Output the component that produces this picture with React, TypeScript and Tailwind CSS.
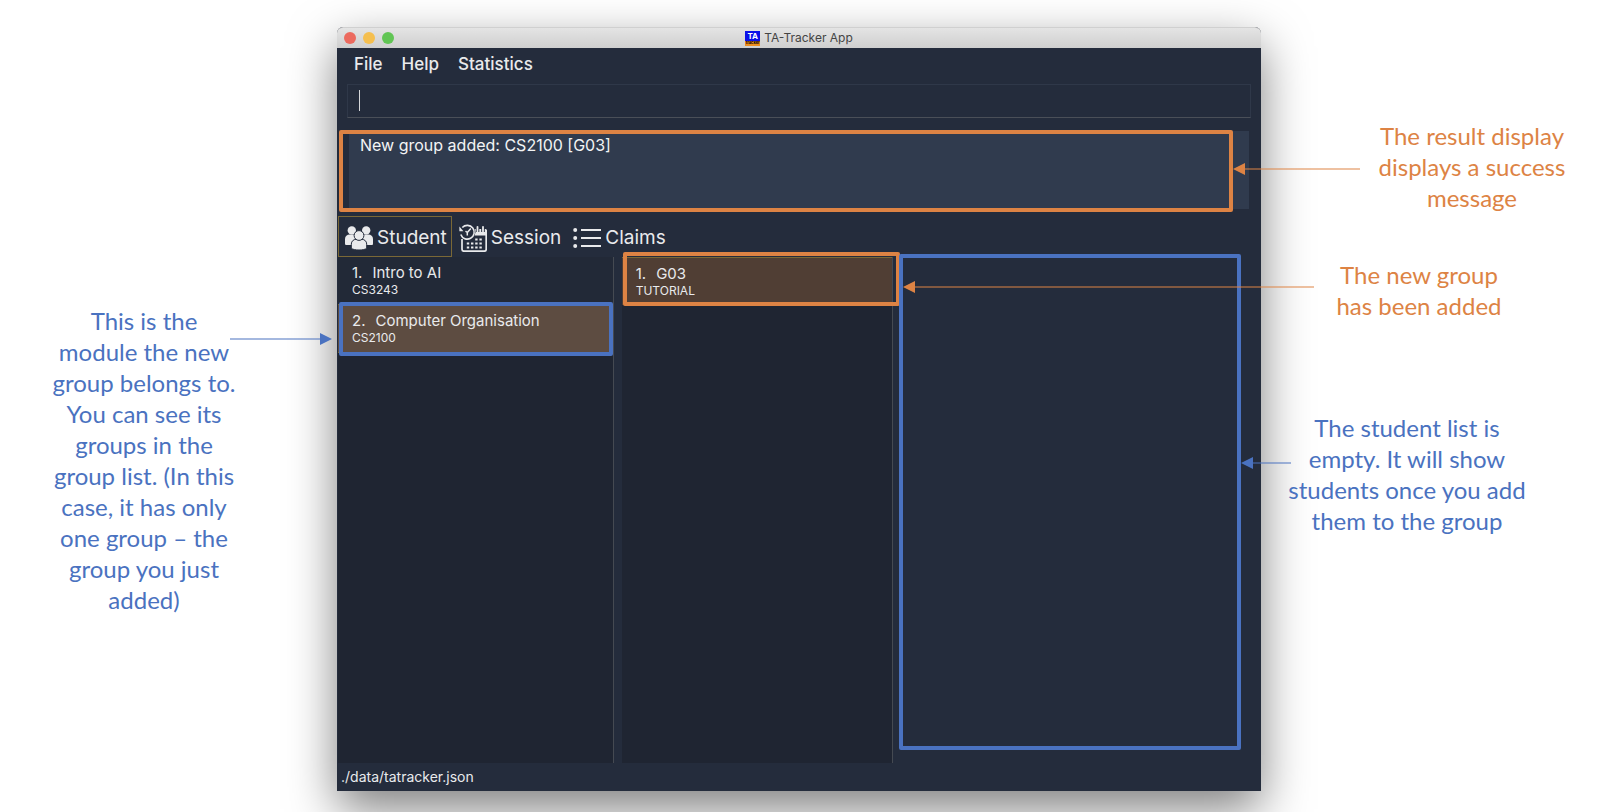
import React from "react";

type Side = "left" | "right";

function Arrow({ side, className }: { side: Side; className: string }) {
  return (
    <span
      aria-hidden="true"
      className={`pointer-events-none absolute z-20 flex h-3 items-center ${side === "right" ? "flex-row-reverse" : ""} ${className}`}
    >
      <svg className="h-3 w-3 shrink-0" viewBox="0 0 12 12" fill="currentColor">
        {side === "left" ? <path d="M0 6 12 0v12z" /> : <path d="M12 6 0 0v12z" />}
      </svg>
      <span className="h-0.5 grow bg-current opacity-50" />
    </span>
  );
}

function Frame({ className }: { className: string }) {
  return <span aria-hidden="true" className={`pointer-events-none absolute z-10 rounded-xs border-4 ${className}`} />;
}

function PeopleIcon() {
  return (
    <svg className="h-6 w-7" viewBox="0 0 28 24" fill="#e9eaec">
      <circle cx="6.8" cy="4.4" r="4.2" />
      <circle cx="21.2" cy="4.4" r="4.2" />
      <path d="M0 17.500V13c0-3 2.200-4.600 4.600-4.600h4.600c1 0 2 .5 2.500 1v9.600H1.500C.5 19 0 18.500 0 17.500z" />
      <path d="M28 17.500V13c0-3-2.200-4.600-4.600-4.600h-4.600c-1 0-2 .5-2.500 1v9.600h10.200c1 0 1.500-.5 1.500-1.500z" />
      <g stroke="#242c3c" strokeWidth="1">
        <path d="M6.300 22.500v-4.300c0-3 2.200-4.900 5-4.900h5.400c2.800 0 5 1.900 5 4.900v4.300c-2 1-4.500 1.500-7.700 1.500s-5.700-.5-7.700-1.500z" />
        <circle cx="14" cy="9.500" r="4.900" />
      </g>
    </svg>
  );
}

function SessionIcon() {
  return (
    <svg className="h-7 w-7" viewBox="0 0 28 28" fill="none" stroke="#e9eaec">
      <path d="M3 15v10.200Q3 27.200 5 27.200h20.200Q27.200 27.200 27.200 25.200V6" strokeWidth="1.700" />
      <path d="M15 5h11.500Q28 5 28 6.500V11.500H14z" fill="#e9eaec" stroke="none" />
      <path d="M18.500 3v5M24 3v5" stroke="#242c3c" strokeWidth="3.600" />
      <path d="M18.500 2.800v4.700M24 2.800v4.700" strokeWidth="1.800" strokeLinecap="round" />
      <circle cx="8.200" cy="8.200" r="8.200" fill="#242c3c" stroke="none" />
      <path d="M3.300 3.500A6.900 6.900 0 1 1 1.800 10.500" strokeWidth="1.600" />
      <path d="M.4 2.500v4.800h4z" fill="#e9eaec" stroke="none" />
      <path d="M11.800 4.500 8.300 8.500v3M8.300 8.500 6.500 7.200" strokeWidth="1.500" />
      <path d="M16.200 15.500H24M7.800 19.500H24M7.800 23.500H24" strokeWidth="2.200" strokeDasharray="2.400 1.800" />
    </svg>
  );
}

function ListIcon() {
  return (
    <svg className="h-6 w-7" viewBox="0 0 28 24" fill="#e9eaec">
      <circle cx="2.200" cy="4" r="2" />
      <circle cx="2.200" cy="12" r="2" />
      <circle cx="2.200" cy="20" r="2" />
      <path d="M8 3h20v2H8zM8 11h20v2H8zM8 19h20v2H8z" />
    </svg>
  );
}

function Tab({ label, selected, children }: { label: string; selected?: boolean; children: React.ReactNode }) {
  return (
    <button
      type="button"
      role="tab"
      aria-selected={!!selected}
      className={`flex h-[41px] items-center gap-1 border pl-1.5 pr-1 pt-0.5 text-[19px] ${selected ? "border-[#7a6836]" : "border-transparent"}`}
    >
      {children}
      {label}
    </button>
  );
}

function Entry({ index, title, detail }: { index: number; title: string; detail: string }) {
  return (
    <div className="flex h-[47px] flex-col justify-center px-3.5 pb-px">
      <div className="flex gap-2.5 text-[15px] leading-[18px]">
        <span>{index}.</span>
        <span>{title}</span>
      </div>
      <div className="text-xs leading-[15px]">{detail}</div>
    </div>
  );
}

export default function App() {
  return (
    <main className="grid min-h-screen grid-cols-[337fr_924fr_349fr] overflow-hidden bg-white pt-[27px] font-['Lato',sans-serif] text-[24px] leading-[31px]">
      <aside className="relative z-10 text-center text-[#4a72c0]">
        <p className="ml-[51px] mt-[278px] w-[186px]">
          This is the module the new group belongs to. You can see its groups in the group list. (In this case, it has
          only one group – the group you just added)
        </p>
        <Arrow side="right" className="left-[230px] right-[5px] top-[306px]" />
      </aside>

      <section className="flex h-[764px] flex-col rounded-t-md bg-[#242c3c] font-['Inter',sans-serif] leading-5 text-[#e9eaec] shadow-[0_18px_48px_rgba(0,0,0,0.5)]">
        <header className="relative flex h-[21px] shrink-0 items-center justify-center gap-1 rounded-t-md border-t border-[#d0d0d0] bg-linear-to-b from-[#e4e4e4] to-[#cfcfcf] text-[12px] text-[#444444]">
          <span className="absolute left-[7px] flex gap-[7px]">
            <span className="size-3 rounded-full bg-[#ec6a5e]" />
            <span className="size-3 rounded-full bg-[#f5bf4f]" />
            <span className="size-3 rounded-full bg-[#61c554]" />
          </span>
          <span className="flex h-[15px] w-[15px] flex-col text-center font-bold">
            <span className="h-[10px] bg-[#0b10e8] text-[8px] leading-[10px] text-white">TA</span>
            <span className="flex h-[5px] justify-center overflow-hidden bg-[#ee8e1e] text-[4px] leading-[4px] text-black">
              tracker
            </span>
          </span>
          <h1>TA-Tracker App</h1>
        </header>

        <nav className="flex h-9 items-center gap-[19px] px-[17px] pb-1 text-[17px] font-medium">
          <button type="button">File</button>
          <button type="button">Help</button>
          <button type="button">Statistics</button>
        </nav>

        <div className="relative mx-2.5 h-[34px] shrink-0">
          <input
            aria-label="Command"
            className="block h-full w-full border border-b-[#4a4f58] border-l-[#2f3849] border-r-[#2f3849] border-t-[#2f3849] bg-transparent px-3 text-base outline-none"
          />
          <span aria-hidden="true" className="absolute left-3 top-1.5 h-[21px] w-px bg-[#d5d7da]" />
        </div>

        <div className="relative mx-3 mt-[13px] h-[78px] shrink-0 bg-[#303b4e] px-[11px] pt-1 text-base leading-5 text-[#f3f4f5]">
          <output>New group added: CS2100 [G03]</output>
          <Frame className="-bottom-[3px] -left-2.5 -top-px right-4 border-[#dd8344]" />
        </div>

        <div role="tablist" className="mt-[7px] flex shrink-0 pl-px">
          <Tab label="Student" selected>
            <PeopleIcon />
          </Tab>
          <Tab label="Session">
            <SessionIcon />
          </Tab>
          <Tab label="Claims">
            <ListIcon />
          </Tab>
        </div>

        <div className="grid h-[506px] shrink-0 grid-cols-[276fr_272fr_360fr] gap-2 pl-px">
          <ul aria-label="Modules" className="border-r border-[#454a52] bg-[#1f2532]">
            <li className="bg-[#222937]">
              <Entry index={1} title="Intro to AI" detail="CS3243" />
            </li>
            <li className="relative border-y border-[#7a6836] bg-[#5d4c41]">
              <Entry index={2} title="Computer Organisation" detail="CS2100" />
              <Frame className="-bottom-1 -top-[3px] left-px right-0 border-[#4a72c0]" />
            </li>
          </ul>
          <ul aria-label="Groups" className="border-r border-[#454a52] bg-[#1f2532]">
            <li className="relative border-t border-[#7a6836] bg-[#503e34]">
              <Entry index={1} title="G03" detail="TUTORIAL" />
              <Frame className="-bottom-px -right-2 -top-1.5 left-px border-[#dd8344]" />
            </li>
          </ul>
          <div aria-label="Students" className="relative">
            <Frame className="-left-0.5 -top-[3px] bottom-[13px] right-5 border-[#4a72c0]" />
          </div>
        </div>

        <footer className="px-1 pt-1 text-[14px] leading-5">./data/tatracker.json</footer>
      </section>

      <aside className="relative z-10 text-center">
        <div className="text-[#dd8344]">
          <p className="ml-[111px] mt-[93px] w-[200px]">The result display displays a success message</p>
          <p className="ml-[70px] mt-[46px] w-44">The new group has been added</p>
          <Arrow side="left" className="-left-7 right-[250px] top-[136px]" />
          <Arrow side="left" className="-left-[358px] right-[296px] top-[254px]" />
        </div>
        <p className="ml-[22px] mt-[91px] w-[248px] text-[#4a72c0]">
          The student list is empty. It will show students once you add them to the group
        </p>
        <Arrow side="left" className="-left-5 right-[319px] top-[430px] text-[#4a72c0]" />
      </aside>
    </main>
  );
}
